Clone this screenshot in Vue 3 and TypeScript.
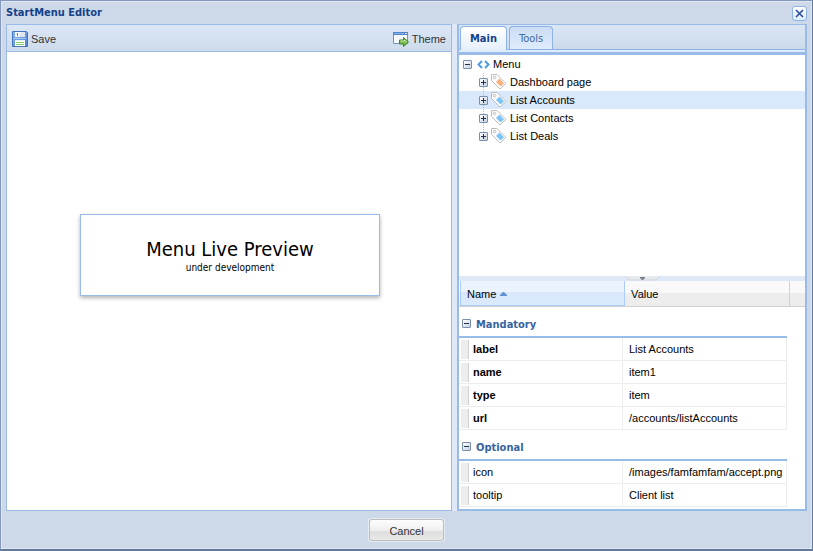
<script setup lang="ts">
import { ref } from 'vue'

interface TreeItem {
  text: string
  tint: string
}

interface Property {
  key: string
  value: string
}

interface PropertyGroup {
  title: string
  required: boolean
  rows: Property[]
}

const items: TreeItem[] = [
  { text: 'Dashboard page', tint: 'orange' },
  { text: 'List Accounts', tint: 'blue' },
  { text: 'List Contacts', tint: 'blue' },
  { text: 'List Deals', tint: 'blue' },
]

const groups: PropertyGroup[] = [
  {
    title: 'Mandatory',
    required: true,
    rows: [
      { key: 'label', value: 'List Accounts' },
      { key: 'name', value: 'item1' },
      { key: 'type', value: 'item' },
      { key: 'url', value: '/accounts/listAccounts' },
    ],
  },
  {
    title: 'Optional',
    required: false,
    rows: [
      { key: 'icon', value: '/images/famfamfam/accept.png' },
      { key: 'tooltip', value: 'Client list' },
    ],
  },
]

const tabs = ['Main', 'Tools']
const activeTab = ref('Main')
const selected = ref('List Accounts')
</script>

<template>
  <div class="window">
    <header class="titlebar">
      <h1>StartMenu Editor</h1>
      <button class="close" type="button" aria-label="Close">
        <svg width="9" height="9" viewBox="0 0 9 9"><path d="M1 1l7 7M8 1L1 8" stroke="#2c4a9c" stroke-width="1.6" /></svg>
      </button>
    </header>

    <main class="body">
      <section class="preview">
        <div class="toolbar">
          <button type="button" class="tool">
            <svg width="16" height="16" viewBox="0 0 16 16">
              <defs>
                <linearGradient id="disk" x1="0" y1="0" x2="1" y2="1">
                  <stop offset="0" stop-color="#8db8f0" />
                  <stop offset="1" stop-color="#4a80cf" />
                </linearGradient>
              </defs>
              <path d="M.5.5h14l1 1v14H.5z" fill="url(#disk)" stroke="#4275bd" />
              <path d="M3 1h10v5H3z" fill="#f4f7fb" />
              <path d="M5 2h1v3H5z" fill="#4b7fc8" />
              <path d="M9 1h4v5H7z" fill="#dde5ef" />
              <path d="M2 7h12v1H2z" fill="#a9caf5" />
              <path d="M3 9h10v6H3z" fill="#fff" />
              <path d="M4 11h8v1H4zM4 13h8v1H4z" fill="#86c765" />
              <path d="M3 9h10v1H3z" fill="#e6eef6" />
            </svg>
            Save
          </button>
          <button type="button" class="tool">
            <svg width="16" height="16" viewBox="0 0 16 16">
              <path d="M.5 1.500h14v11H.5z" fill="#f5f9fd" stroke="#7295bd" />
              <path d="M0 1h15v3H0z" fill="#4f86c9" />
              <path d="M1 2h10v1H1z" fill="#85b2ea" />
              <path d="M12 2h2v1h-2z" fill="#f6e8d9" />
              <path d="M6.500 9h4V6.500l5 4.500-5 4.500V13h-4z" fill="#7abb50" stroke="#3c8524" />
              <path d="M7.500 10h4V9l2.500 2" fill="none" stroke="#c2e69d" />
            </svg>
            Theme
          </button>
        </div>
        <div class="canvas">
          <div class="card">
            <h2>Menu Live Preview</h2>
            <p>under development</p>
          </div>
        </div>
      </section>

      <section class="side">
        <nav class="tabs" role="tablist">
          <button
            v-for="tab in tabs"
            :key="tab"
            type="button"
            role="tab"
            class="tab"
            :class="{ active: tab === activeTab }"
            :aria-selected="tab === activeTab"
            @click="activeTab = tab"
          >{{ tab }}</button>
        </nav>
        <div class="strip"></div>

        <div class="tree" role="tree">
          <div class="node root" role="treeitem" aria-expanded="true">
            <span class="toggle"></span>
            <svg class="code" width="13" height="9" viewBox="0 0 13 9"><path d="M5 1L1.500 4.500 5 8M8 1l3.500 3.500L8 8" fill="none" stroke="#509de3" stroke-width="2" /></svg>
            Menu
          </div>
          <div
            v-for="item in items"
            :key="item.text"
            class="node child"
            role="treeitem"
            :class="{ selected: item.text === selected }"
            :aria-selected="item.text === selected"
            @click="selected = item.text"
          >
            <span class="toggle plus"></span>
            <svg class="tag" :class="item.tint" width="16" height="16" viewBox="0 0 16 16">
              <path d="M.5.5H6l9 9-6 5.500L.5 6.500z" fill="#fdfdfd" stroke="#bdbdbd" />
              <path class="ink" d="M8.500 4.500l4.500 5-3.500 3L5 8z" />
              <circle cx="3.500" cy="3.500" r="1.300" fill="#fff" stroke="#bdbdbd" />
            </svg>
            {{ item.text }}
          </div>
        </div>

        <div class="splitter">
          <button type="button" class="collapse" aria-label="Collapse">
            <svg width="35" height="5" viewBox="0 0 35 5"><path d="M0 0h35l-4 4H4z" fill="#e6e9ed" /><path d="M0 0l4 4h27l4-4" fill="none" stroke="#cfd5dd" /><path d="M15 1h5v1l-2 2h-1l-2-2z" fill="#7c828c" /></svg>
          </button>
        </div>

        <div class="head">
          <button type="button" class="col sorted">
            Name
            <svg width="7" height="4" viewBox="0 0 7 4"><path d="M3 0h1l3 3v1H0V3z" fill="#6492cf" /></svg>
          </button>
          <button type="button" class="col">Value</button>
        </div>

        <div class="props">
          <div v-for="group in groups" :key="group.title" class="group">
            <h3><span class="toggle"></span>{{ group.title }}</h3>
            <table :aria-label="group.title">
              <tbody>
                <tr v-for="row in group.rows" :key="row.key">
                  <th scope="row" :class="{ required: group.required }">{{ row.key }}</th>
                  <td>{{ row.value }}</td>
                </tr>
              </tbody>
            </table>
          </div>
        </div>
      </section>
    </main>

    <footer class="footer">
      <button type="button" class="cancel">Cancel</button>
    </footer>
  </div>
</template>

<style>
body {
  margin: 0;
}
</style>

<style scoped>
* {
  box-sizing: border-box;
}

button {
  font: inherit;
  color: inherit;
  border: 0;
  background: none;
  padding: 0;
  margin: 0;
}

h1,
h2,
h3,
p {
  margin: 0;
}

svg {
  display: block;
  flex: none;
}

.window {
  display: flex;
  flex-direction: column;
  min-height: 100vh;
  padding: 0 4px;
  border: 1px solid #8298bf;
  border-right-color: #62799b;
  border-bottom: 2px solid #62799b;
  background: #cdd9e8;
  box-shadow: inset 0 0 0 1px #e1e7f1;
  font: 11px/14px "Liberation Sans", Arial, sans-serif;
  color: #000;
}

.titlebar {
  display: flex;
  align-items: center;
  justify-content: space-between;
  height: 23px;
  padding: 1px 1px 0;
}

.titlebar h1 {
  font: bold 11px/14px "DejaVu Sans Condensed", "DejaVu Sans", sans-serif;
  color: #15428b;
}

.close {
  display: grid;
  place-items: center;
  width: 15px;
  height: 15px;
  border: 1px solid #8db2e3;
  border-radius: 3px;
  background: linear-gradient(#fff, #dcebfb);
}

.body {
  display: grid;
  flex: 1;
  grid-template-columns: 446fr 350fr;
  gap: 5px;
  margin: 0 1px;
  background: #dfe8f6;
}

.preview {
  display: flex;
  flex-direction: column;
  min-width: 0;
  border: 1px solid #99bbe8;
  background: #fff;
}

.toolbar {
  display: flex;
  align-items: center;
  justify-content: space-between;
  height: 27px;
  padding: 2px 5px 0;
  border-bottom: 1px solid #99bbe8;
  background: linear-gradient(#dbe7f5, #cddbec);
}

.tool {
  display: flex;
  align-items: center;
  gap: 3px;
  color: #333;
}

.canvas {
  display: grid;
  flex: 1;
  place-items: center;
  padding: 0 0 53px 2px;
}

.card {
  width: 300px;
  max-width: 90%;
  padding: 22px 10px 20px;
  border: 1px solid #99bbe8;
  background: #fff;
  box-shadow: 0 2px 4px rgba(0, 0, 0, 0.3);
  font-family: "DejaVu Sans Condensed", "DejaVu Sans", sans-serif;
  text-align: center;
}

.card h2 {
  font-size: 20px;
  font-weight: 400;
  line-height: 24px;
}

.card p {
  font-size: 10px;
  line-height: 14px;
}

.side {
  display: flex;
  flex-direction: column;
  min-width: 0;
  border: 2px solid #99bbe8;
  border-top-width: 1px;
  background: #fff;
}

.tabs {
  display: flex;
  align-items: flex-end;
  gap: 2px;
  height: 25px;
  padding: 0 1px;
  border-bottom: 1px solid #8db2e3;
  background: linear-gradient(#dbe6f4, #cbdaeb);
}

.tab {
  height: 23px;
  padding: 1px 9px 0;
  border: 1px solid #8db2e3;
  border-bottom: 0;
  border-radius: 4px 4px 0 0;
  background: linear-gradient(#cbddf5, #deebfb);
  font-family: "DejaVu Sans Condensed", "DejaVu Sans", sans-serif;
  color: #416aa3;
}

.tab.active {
  height: 24px;
  margin-bottom: -1px;
  padding-top: 0;
  background: linear-gradient(#fff, #e5effc);
  font-weight: 700;
  color: #15428b;
}

.strip {
  height: 5px;
  border-bottom: 3px solid #99bbe8;
  background: #deecfd;
}

.tree {
  flex: 1;
  min-height: 100px;
}

.node {
  display: flex;
  align-items: center;
  height: 18px;
  padding-left: 4px;
}

.root {
  gap: 5px;
}

.root .code {
  margin-right: -2px;
}

.child {
  gap: 3px;
  padding-left: 20px;
  background: repeating-linear-gradient(#bbb 0 1px, transparent 1px 2px) 24px 0 / 1px 100% no-repeat;
}

.child:last-child {
  background-size: 1px 50%;
}

.child.selected {
  background-color: #d9e8fb;
}

.tag .ink {
  fill: #7cc3f8;
}

.tag.orange .ink {
  fill: #f8b07c;
}

.toggle {
  flex: none;
  width: 9px;
  height: 9px;
  border: 1px solid #7890ae;
  border-radius: 1px;
  background:
    linear-gradient(#203050, #203050) center / 5px 1px no-repeat,
    linear-gradient(135deg, #fff, #c3d0e0);
}

.toggle.plus {
  background:
    linear-gradient(#203050, #203050) center / 5px 1px no-repeat,
    linear-gradient(#203050, #203050) center / 1px 5px no-repeat,
    linear-gradient(135deg, #fff, #c3d0e0);
}

.splitter {
  display: flex;
  justify-content: center;
  height: 5px;
  padding-left: 20px;
  background: #dfe8f6;
}

.collapse {
  height: 5px;
}

.head {
  display: flex;
  height: 26px;
  padding: 0 1px;
  border-bottom: 1px solid #d0d0d0;
  background: linear-gradient(#f9f9f9 50%, #ededee 50%);
}

.col {
  display: flex;
  flex: 0 0 48%;
  align-items: center;
  gap: 4px;
  padding: 1px 6px 0;
  border-right: 1px solid #d0d0d0;
}

.sorted {
  border: 1px solid #aaccf6;
  border-width: 0 1px 1px;
  background: linear-gradient(#ebf3fd 45%, #d9e8fb 45%);
}

.props {
  padding: 0 18px 2px 0;
}

.group h3 {
  display: flex;
  align-items: center;
  gap: 5px;
  height: 31px;
  padding: 7px 3px 0;
  border-bottom: 2px solid #99bbe8;
  font: bold 11px/14px "DejaVu Sans Condensed", "DejaVu Sans", sans-serif;
  color: #3764a0;
}

.group h3 .toggle {
  margin-bottom: 3px;
}

table {
  width: 100%;
  table-layout: fixed;
  border-collapse: separate;
  border-spacing: 0;
}

th,
td {
  height: 23px;
  padding: 0 0 0 6px;
  border-right: 1px solid #ededed;
  border-bottom: 1px solid #ededed;
  font-weight: 400;
  text-align: left;
  white-space: nowrap;
}

th {
  width: 50%;
  padding-left: 14px;
  background:
    linear-gradient(90deg, #ededee 7px, #d0d0d0 7px) 2px 2px / 8px 19px no-repeat;
}

th.required {
  font-weight: 700;
}

.footer {
  display: flex;
  justify-content: center;
  height: 38px;
  padding-top: 8px;
}

.cancel {
  width: 75px;
  height: 22px;
  padding-top: 2px;
  border: 1px solid #bcbcbc;
  border-radius: 3px;
  background: linear-gradient(#fdfdfd, #f0f0f0 50%, #dedede 60%, #e9e9e9);
  box-shadow: 0 0 0 1px rgba(255, 255, 255, 0.5);
  color: #333;
}
</style>
